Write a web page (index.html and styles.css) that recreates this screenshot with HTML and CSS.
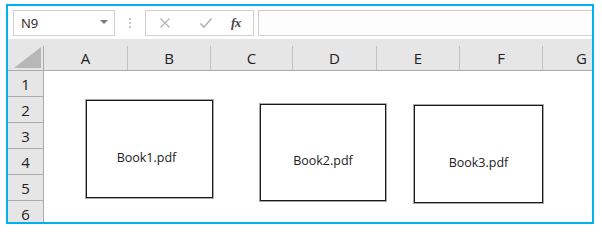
FILE: index.html
```html
<!DOCTYPE html>
<html>
<head>
<meta charset="utf-8">
<link rel="stylesheet" href="styles.css">
</head>
<body>
<div class="frame">
  <div class="fbar">
    <div class="namebox"><span class="nb-text">N9</span><span class="nb-arrow"></span></div>
    <div class="grip"><i></i><i></i><i></i></div>
    <div class="fbtns">
      <svg class="ic ic-x" width="12" height="12" viewBox="0 0 12 12"><path d="M1.5 1.5 L10.5 10.5 M10.5 1.5 L1.5 10.5" stroke="#b4b4b4" stroke-width="1.3" fill="none"/></svg>
      <svg class="ic ic-ok" width="14" height="12" viewBox="0 0 14 12"><path d="M1.5 6.5 L5 10 L12.5 1.5" stroke="#b4b4b4" stroke-width="1.6" fill="none"/></svg>
      <span class="fx">fx</span>
    </div>
    <div class="finput"></div>
  </div>
  <div class="sheet">
    <div class="hdr">
      <div class="corner"><span class="tri"></span></div>
      <div class="ch">A</div><div class="ch">B</div><div class="ch">C</div><div class="ch">D</div><div class="ch">E</div><div class="ch">F</div><div class="ch last">G</div>
    </div>
    <div class="rows">
      <div class="rh">1</div>
      <div class="rh">2</div>
      <div class="rh">3</div>
      <div class="rh">4</div>
      <div class="rh">5</div>
      <div class="rh">6</div>
    </div>
    <div class="obj obj1"><span>Book1.pdf</span></div>
    <div class="obj obj2"><span>Book2.pdf</span></div>
    <div class="obj obj3"><span>Book3.pdf</span></div>
  </div>
</div>
</body>
</html>
```
FILE: styles.css
```css
html, body { margin: 0; padding: 0; background: #ffffff; }
body { padding: 4px 0 0 6px; font-family: "Open Sans", "Noto Sans", sans-serif; }
.frame {
  width: 584px; height: 216px;
  border: 2px solid #00b0f0;
  overflow: hidden;
  background: #ffffff;
}
.fbar {
  height: 33px;
  display: flex; align-items: flex-start;
  background: #ffffff;
  box-sizing: border-box;
  padding-top: 4px;
}
.namebox {
  margin-left: 5px;
  width: 102px; height: 26px; box-sizing: border-box;
  border: 1px solid #d0d0d0; background: #fff;
  display: flex; align-items: center; justify-content: space-between;
  padding: 0 6px 0 7px;
}
.nb-text { font-size: 13px; color: #222; }
.nb-arrow { width: 0; height: 0; border-left: 4px solid transparent; border-right: 4px solid transparent; border-top: 4px solid #7a7a7a; margin-top: -2px; }
.grip { width: 30px; height: 26px; display: flex; flex-direction: column; align-items: center; justify-content: center; gap: 2px; }
.grip i { width: 2px; height: 2px; background: #c4c4c4; display: block; }
.fbtns {
  width: 109px; height: 26px; box-sizing: border-box;
  border: 1px solid #d0d0d0; background: #fff;
  display: flex; align-items: center;
}
.ic-x { margin-left: 13px; }
.ic-ok { margin-left: 28px; }
.fx { margin-left: 18px; font-family: "Liberation Serif", serif; font-style: italic; font-weight: bold; font-size: 13px; color: #444; letter-spacing: -0.5px; }
.finput {
  margin-left: 4px; flex: 1; height: 26px; box-sizing: border-box;
  border: 1px solid #d0d0d0; border-right: none; background: #fdfdfd;
}
.sheet { position: relative; }
.hdr {
  display: grid;
  grid-template-columns: 36px 84px 83px 82px 84px 83px 83px 1fr;
  height: 31px; background: #e6e6e6;
  border-bottom: 1px solid #ababab;
}
.corner { position: relative; border-right: 1px solid #ababab; margin-top: 7px; }
.tri { position: absolute; right: 2px; bottom: 2px; width: 27px; height: 21px; background: #b7b7b7; clip-path: polygon(100% 0, 100% 100%, 0 100%); }
.ch {
  border-right: 1px solid #c2c2c2;
  margin-top: 7px;
  display: flex; align-items: center; justify-content: center;
  font-size: 15px; color: #222; padding-bottom: 1px;
}
.ch.last { border-right: none; justify-content: flex-start; padding-left: 33px; }
.rows { display: flex; flex-direction: column; width: 36px; }
.rh {
  height: 25px; border-bottom: 1px solid #ababab; border-right: 1px solid #ababab;
  background: #e6e6e6; display: flex; align-items: center; justify-content: center;
  font-size: 15px; color: #222;
}
.obj {
  position: absolute; box-sizing: border-box;
  border: 1px solid #1a1a1a; background: #fff;
  box-shadow: 0 0 0 1px #a8a8a8;
  display: flex; justify-content: center; align-items: center;
  font-family: "Open Sans", sans-serif; font-size: 12.5px; color: #222;
  padding-top: 16px;
}
.obj1 { left: 78px; top: 61px; width: 127px; height: 98px; padding-right: 6px; }
.obj2 { left: 252px; top: 65px; width: 126px; height: 97px; }
.obj3 { left: 406px; top: 66px; width: 129px; height: 98px; }
```
